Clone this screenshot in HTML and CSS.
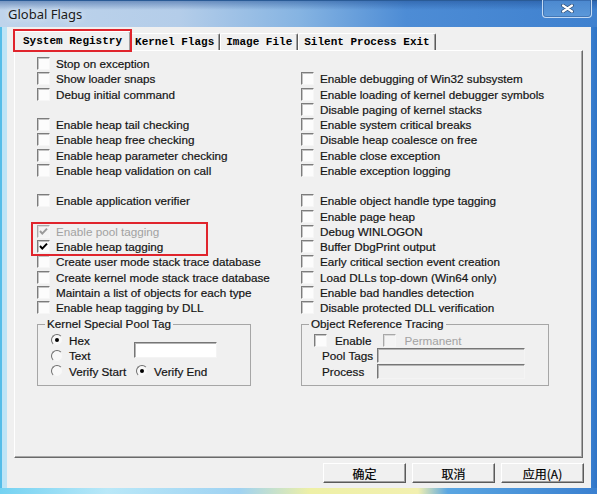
FILE: index.html
```html
<!DOCTYPE html>
<html>
<head>
<meta charset="utf-8">
<title>Global Flags</title>
<link rel="stylesheet" href="styles.css">
</head>
<body>
<div class="window">
  <div class="titlebar">
    <span class="title">Global Flags</span>
    <div class="close">
      <svg width="13" height="9" viewBox="0 0 13 9"><path d="M2 1.5 L11 7.5 M11 1.5 L2 7.5" stroke="#28466e" stroke-width="3.6" stroke-linecap="round"/><path d="M2 1.5 L11 7.5 M11 1.5 L2 7.5" stroke="#fff" stroke-width="2.2" stroke-linecap="round"/></svg>
    </div>
  </div>
  <div class="client">
    <div class="tabs">
      <div class="tab sel">System Registry</div>
      <div class="tab">Kernel Flags</div>
      <div class="tab">Image File</div>
      <div class="tab">Silent Process Exit</div>
    </div>
    <div class="panel">
      <div class="cols">
        <div class="col left">
          <div class="row"><span class="cb"></span><span>Stop on exception</span></div>
          <div class="row"><span class="cb"></span><span>Show loader snaps</span></div>
          <div class="row"><span class="cb"></span><span>Debug initial command</span></div>
          <div class="row"></div>
          <div class="row"><span class="cb"></span><span>Enable heap tail checking</span></div>
          <div class="row"><span class="cb"></span><span>Enable heap free checking</span></div>
          <div class="row"><span class="cb"></span><span>Enable heap parameter checking</span></div>
          <div class="row"><span class="cb"></span><span>Enable heap validation on call</span></div>
          <div class="row"></div>
          <div class="row"><span class="cb"></span><span>Enable application verifier</span></div>
          <div class="row"></div>
          <div class="hl">
            <div class="row dis"><span class="cb"><svg width="11" height="11" viewBox="0 0 11 11"><path d="M2 5 L4.3 7.6 L9 2.6" fill="none" stroke="#9a9a9a" stroke-width="2"/></svg></span><span>Enable pool tagging</span></div>
            <div class="row"><span class="cb"><svg width="11" height="11" viewBox="0 0 11 11"><path d="M2 5 L4.3 7.6 L9 2.6" fill="none" stroke="#000" stroke-width="2"/></svg></span><span>Enable heap tagging</span></div>
          </div>
          <div class="row"><span class="cb"></span><span>Create user mode stack trace database</span></div>
          <div class="row"><span class="cb"></span><span>Create kernel mode stack trace database</span></div>
          <div class="row"><span class="cb"></span><span>Maintain a list of objects for each type</span></div>
          <div class="row"><span class="cb"></span><span>Enable heap tagging by DLL</span></div>
        </div>
        <div class="col right">
          <div class="row"></div>
          <div class="row"><span class="cb"></span><span>Enable debugging of Win32 subsystem</span></div>
          <div class="row"><span class="cb"></span><span>Enable loading of kernel debugger symbols</span></div>
          <div class="row"><span class="cb"></span><span>Disable paging of kernel stacks</span></div>
          <div class="row"><span class="cb"></span><span>Enable system critical breaks</span></div>
          <div class="row"><span class="cb"></span><span>Disable heap coalesce on free</span></div>
          <div class="row"><span class="cb"></span><span>Enable close exception</span></div>
          <div class="row"><span class="cb"></span><span>Enable exception logging</span></div>
          <div class="row"></div>
          <div class="row"><span class="cb"></span><span>Enable object handle type tagging</span></div>
          <div class="row"><span class="cb"></span><span>Enable page heap</span></div>
          <div class="row"><span class="cb"></span><span>Debug WINLOGON</span></div>
          <div class="row"><span class="cb"></span><span>Buffer DbgPrint output</span></div>
          <div class="row"><span class="cb"></span><span>Early critical section event creation</span></div>
          <div class="row"><span class="cb"></span><span>Load DLLs top-down (Win64 only)</span></div>
          <div class="row"><span class="cb"></span><span>Enable bad handles detection</span></div>
          <div class="row"><span class="cb"></span><span>Disable protected DLL verification</span></div>
        </div>
      </div>
      <div class="groups">
        <fieldset class="group g1">
          <legend>Kernel Special Pool Tag</legend>
          <div class="g1-body">
            <div class="opt r1"><span class="rb on"></span><span>Hex</span></div>
            <div class="tb"></div>
            <div class="opt r2"><span class="rb"></span><span>Text</span></div>
            <div class="opt r3"><span class="rb"></span><span>Verify Start</span></div>
            <div class="opt r3 c2"><span class="rb on"></span><span>Verify End</span></div>
          </div>
        </fieldset>
        <fieldset class="group g2">
          <legend>Object Reference Tracing</legend>
          <div class="g2-body">
            <div class="g2-top">
              <div class="opt"><span class="cb"></span><span>Enable</span></div>
              <div class="opt dis"><span class="cb"></span><span>Permanent</span></div>
            </div>
            <div class="field"><span class="lbl">Pool Tags</span><span class="tb off"></span></div>
            <div class="field"><span class="lbl">Process</span><span class="tb off"></span></div>
          </div>
        </fieldset>
      </div>
    </div>
    <div class="buttons">
      <button class="btn">确定</button>
      <button class="btn">取消</button>
      <button class="btn">应用(A)</button>
    </div>
  </div>
</div>
</body>
</html>
```

FILE: styles.css
```css
* { box-sizing: border-box; }
html, body { margin: 0; padding: 0; }
body {
  width: 597px;
  height: 494px;
  overflow: hidden;
  background: #fff;
  font-family: "Liberation Sans", Arial, sans-serif;
  font-size: 11.7px;
  color: #141414;
  -webkit-text-stroke: 0.2px currentColor;
}

.window {
  width: 597px;
  height: 494px;
  display: flex;
  flex-direction: column;
  background:
    linear-gradient(to right, #74d2f2 0, #b9e8f8 18%, #9fd2f2 40%, #eef0a6 52%, #f2f0b0 70%, #5aa6e2 75%, #3a80d0 100%) bottom / 100% 6px no-repeat,
    linear-gradient(to right, #55bde8 0, #55bde8 2px, #bde4f6 2px, #bde4f6 7px, #78b0e0 50%, #3a80d0 590px, #2f74c6 597px);
}

.titlebar {
  height: 27px;
  flex: none;
  display: flex;
  justify-content: space-between;
  align-items: flex-start;
  padding: 0 5px 0 8px;
  border-top: 1px solid #2a5b96;
  background:
    linear-gradient(to bottom, rgba(25, 70, 140, 0.45) 0, rgba(25, 70, 140, 0) 9px),
    linear-gradient(to right, #bfd4eb 0, #b4cde9 30%, #86b4e2 50%, #4d8cd5 68%, #3f81cf 100%);
}
.title {
  font-family: "Noto Sans", "Open Sans", sans-serif;
  font-size: 13px;
  line-height: 26px;
  color: #1b1b1b;
  -webkit-text-stroke: 0;
  text-shadow: 0 0 6px rgba(255, 255, 255, 0.9);
}
.close {
  width: 50px;
  height: 18px;
  margin-top: -1px;
  display: flex;
  align-items: center;
  justify-content: center;
  border: 1px solid rgba(225, 238, 252, 0.8);
  border-top: none;
  border-radius: 0 0 4px 4px;
  box-shadow: inset 0 0 0 1px rgba(30, 70, 130, 0.4);
  background: linear-gradient(to bottom, #4b88cf, #5c99da);
}

.client {
  flex: 1;
  margin: 0 6px 6px 7px;
  background: #f0f0f0;
  padding: 4px 8px 0 7px;
  display: flex;
  flex-direction: column;
}

.tabs {
  height: 19px;
  flex: none;
  display: flex;
  align-items: flex-end;
  font-family: "Liberation Mono", "Courier New", monospace;
  font-weight: bold;
  font-size: 11px;
  color: #000;
  -webkit-text-stroke: 0;
}
.tab {
  height: 17px;
  line-height: 16px;
  padding: 0 5px;
  white-space: nowrap;
  background: #f0f0f0;
  border-top: 1px solid #fff;
  border-left: 1px solid #fff;
  border-right: 1px solid #5a5a5a;
  border-radius: 2px 2px 0 0;
  box-shadow: inset -1px 0 0 #a0a0a0;
}
.tab.sel {
  height: 20px;
  line-height: 19px;
  padding: 0 8px;
  margin-bottom: -1px;
  margin-right: -2px;
  position: relative;
  z-index: 1;
}
.tab.sel::after {
  content: "";
  position: absolute;
  top: -3px;
  left: -2px;
  right: -2px;
  bottom: -1px;
  border: 2px solid #e0242c;
}

.panel {
  height: 408px;
  flex: none;
  border: 1px solid;
  border-color: #fff #6a6a6a #6a6a6a #fff;
  box-shadow: inset -1px -1px 0 #a8a8a8;
  padding: 5px 0 0 22px;
}
.cols { display: flex; }
.col.left { width: 264px; }
.row {
  height: 15.25px;
  display: flex;
  align-items: center;
  gap: 6px;
  white-space: nowrap;
}
.cb {
  width: 13px;
  height: 13px;
  flex: none;
  display: flex;
  align-items: center;
  justify-content: center;
  background: #fcfcfc;
  border: 1px solid;
  border-color: #7c7c7c #f6f6f6 #f6f6f6 #7c7c7c;
  box-shadow: inset 1px 1px 0 #c4c4c4;
}
.dis { color: #a2a2a2; -webkit-text-stroke: 0; }
.dis .cb {
  border-color: #a8a8a8 #f6f6f6 #f6f6f6 #a8a8a8;
  box-shadow: inset 1px 1px 0 #dadada;
  background: #f4f4f4;
}
.hl {
  margin-left: -4px;
  padding-left: 4px;
  width: 173px;
  outline: 2px solid #e0242c;
}

.groups {
  display: flex;
  gap: 50px;
  margin-top: 2px;
}
.group {
  margin: 0;
  padding: 0;
  min-width: 0;
  height: 69px;
  border: 1px solid #a6a6a6;
}
.g1 { width: 214px; }
.g2 { width: 248px; }
.group legend {
  margin-left: 7px;
  padding: 0 2px;
  line-height: 14px;
}
.opt {
  display: flex;
  align-items: center;
  gap: 6px;
  white-space: nowrap;
}
.rb {
  width: 12px;
  height: 12px;
  flex: none;
  border-radius: 50%;
  border: 1px solid;
  border-color: #6e6e6e #f0f0f0 #f0f0f0 #6e6e6e;
  background: #f8f8f8;
  display: flex;
  align-items: center;
  justify-content: center;
}
.rb.on::after {
  content: "";
  width: 4px;
  height: 4px;
  border-radius: 50%;
  background: #000;
}
.g1-body {
  display: grid;
  grid-template-columns: 85px auto;
  grid-template-rows: repeat(3, 15.5px);
  padding: 1px 0 0 13px;
}
.g1-body .r1 { grid-row: 1; grid-column: 1; }
.g1-body .r2 { grid-row: 2; grid-column: 1; }
.g1-body .r3 { grid-row: 3; grid-column: 1; }
.g1-body .r3.c2 { grid-column: 2; }
.g1-body .tb {
  grid-row: 1 / span 2;
  grid-column: 2;
  align-self: start;
  margin: 10px 0 0 -2px;
  width: 83px;
  height: 16px;
}
.tb {
  display: block;
  background: #fff;
  border: 1px solid;
  border-color: #767676 #f4f4f4 #f4f4f4 #767676;
  box-shadow: inset 1px 1px 0 #b4b4b4;
}
.tb.off { background: #f0f0f0; }
.g2-body { padding: 1px 0 0 12px; }
.g2-top {
  height: 15.5px;
  display: flex;
  align-items: center;
  gap: 12px;
}
.g2-top .opt { gap: 8px; }
.field {
  height: 16px;
  display: flex;
  align-items: center;
  padding-left: 8px;
}
.lbl { width: 55px; flex: none; }
.field .tb { width: 148px; height: 15px; }

.buttons {
  display: flex;
  justify-content: flex-end;
  gap: 6px;
  margin: 5px -1px 0 0;
}
.btn {
  width: 83px;
  height: 20px;
  padding: 0;
  background: #f0f0f0;
  border: 1px solid;
  border-color: #fff #5a5a5a #5a5a5a #fff;
  box-shadow: inset -1px -1px 0 #a0a0a0;
  font-family: "Noto Sans CJK SC", "Liberation Sans", sans-serif;
  font-size: 12px;
  line-height: 17px;
  color: #000;
  -webkit-text-stroke: 0.2px #000;
}
```
